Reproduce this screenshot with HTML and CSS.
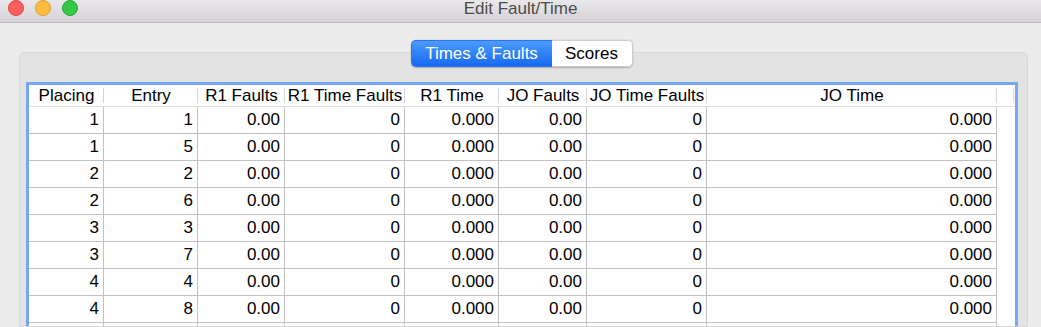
FILE: index.html
```html
<!DOCTYPE html>
<html>
<head>
<meta charset="utf-8">
<link rel="stylesheet" href="styles.css">
</head>
<body>
<div class="window">
  <div class="titlebar">
    <div class="lights">
      <span class="light red"></span>
      <span class="light yellow"></span>
      <span class="light green"></span>
    </div>
    <div class="title">Edit Fault/Time</div>
  </div>
  <div class="tabs">
    <div class="tab active">Times &amp; Faults</div>
    <div class="tab">Scores</div>
  </div>
  <div class="groupbox">
    <div class="table">
      <div class="row head">
        <div class="cell">Placing</div>
        <div class="cell">Entry</div>
        <div class="cell">R1 Faults</div>
        <div class="cell">R1 Time Faults</div>
        <div class="cell">R1 Time</div>
        <div class="cell">JO Faults</div>
        <div class="cell">JO Time Faults</div>
        <div class="cell">JO Time</div>
        <div class="cell fill"></div>
      </div>
      <div class="row"><div class="cell">1</div><div class="cell">1</div><div class="cell">0.00</div><div class="cell">0</div><div class="cell">0.000</div><div class="cell">0.00</div><div class="cell">0</div><div class="cell">0.000</div><div class="cell fill"></div></div>
      <div class="row"><div class="cell">1</div><div class="cell">5</div><div class="cell">0.00</div><div class="cell">0</div><div class="cell">0.000</div><div class="cell">0.00</div><div class="cell">0</div><div class="cell">0.000</div><div class="cell fill"></div></div>
      <div class="row"><div class="cell">2</div><div class="cell">2</div><div class="cell">0.00</div><div class="cell">0</div><div class="cell">0.000</div><div class="cell">0.00</div><div class="cell">0</div><div class="cell">0.000</div><div class="cell fill"></div></div>
      <div class="row"><div class="cell">2</div><div class="cell">6</div><div class="cell">0.00</div><div class="cell">0</div><div class="cell">0.000</div><div class="cell">0.00</div><div class="cell">0</div><div class="cell">0.000</div><div class="cell fill"></div></div>
      <div class="row"><div class="cell">3</div><div class="cell">3</div><div class="cell">0.00</div><div class="cell">0</div><div class="cell">0.000</div><div class="cell">0.00</div><div class="cell">0</div><div class="cell">0.000</div><div class="cell fill"></div></div>
      <div class="row"><div class="cell">3</div><div class="cell">7</div><div class="cell">0.00</div><div class="cell">0</div><div class="cell">0.000</div><div class="cell">0.00</div><div class="cell">0</div><div class="cell">0.000</div><div class="cell fill"></div></div>
      <div class="row"><div class="cell">4</div><div class="cell">4</div><div class="cell">0.00</div><div class="cell">0</div><div class="cell">0.000</div><div class="cell">0.00</div><div class="cell">0</div><div class="cell">0.000</div><div class="cell fill"></div></div>
      <div class="row"><div class="cell">4</div><div class="cell">8</div><div class="cell">0.00</div><div class="cell">0</div><div class="cell">0.000</div><div class="cell">0.00</div><div class="cell">0</div><div class="cell">0.000</div><div class="cell fill"></div></div>
      <div class="row"><div class="cell"></div><div class="cell"></div><div class="cell"></div><div class="cell"></div><div class="cell"></div><div class="cell"></div><div class="cell"></div><div class="cell"></div><div class="cell fill"></div></div>
    </div>
  </div>
</div>
</body>
</html>
```

FILE: styles.css
```css
html, body {
  margin: 0;
  padding: 0;
  height: 327px;
  overflow: hidden;
}
body {
  background: #ececec;
  font-family: "Liberation Sans", Arial, sans-serif;
  font-size: 17px;
  color: #000;
}
.window {
  display: flex;
  flex-direction: column;
  height: 327px;
}
.titlebar {
  height: 22px;
  flex: none;
  display: flex;
  align-items: flex-start;
  background: linear-gradient(#e9e7e9, #d5d3d5);
  border-bottom: 1px solid #bdbbbd;
}
.lights {
  display: flex;
  gap: 11px;
  margin-left: 8px;
  width: 88px;
}
.light {
  width: 16px;
  height: 16px;
  border-radius: 50%;
  box-sizing: border-box;
}
.red { background: #fc605c; border: 1px solid #e0443e; }
.yellow { background: #fdbc40; border: 1px solid #dea123; }
.green { background: #34c84a; border: 1px solid #1fab2f; }
.title {
  flex: 1;
  text-align: center;
  color: #4c4c4c;
  line-height: 18px;
  margin-right: 96px;
}
.tabs {
  align-self: center;
  display: flex;
  margin-top: 17px;
  margin-left: 2px;
  height: 27px;
  position: relative;
  z-index: 1;
  border-radius: 5px;
  box-shadow: 0 0.5px 1.5px rgba(0,0,0,0.25);
}
.tab {
  box-sizing: border-box;
  height: 27px;
  line-height: 26px;
  text-align: center;
  background: #fff;
  border: 1px solid #cdcdcd;
}
.tab:first-child {
  width: 141px;
  border-radius: 5px 0 0 5px;
  border-right: none;
}
.tab:last-child {
  width: 81px;
  border-radius: 0 5px 5px 0;
  border-left: none;
}
.tab.active {
  color: #fff;
  background: linear-gradient(#4c9bfd, #1769f3);
  border-color: #2a74ee;
}
.groupbox {
  margin: -15px 13px 0 19px;
  flex: 1;
  background: #e3e3e3;
  border: 1px solid #d8d8d8;
  border-radius: 6px 6px 0 0;
  padding: 29px 9px 0 6px;
  overflow: hidden;
}
.table {
  border: 3px solid #74a8f1;
  border-bottom: none;
  background: #fff;
}
.row {
  display: grid;
  grid-template-columns: 75px 94px 87px 120px 94px 88px 120px 290px 1fr;
  height: 27px;
}
.cell {
  box-sizing: border-box;
  border-right: 1px solid #c2c2c2;
  border-bottom: 1px solid #c2c2c2;
  text-align: right;
  padding-right: 4px;
  line-height: 26px;
  white-space: nowrap;
  overflow: hidden;
}
.cell.fill {
  border: none;
}
.row.head {
  height: 22px;
}
.head .cell {
  text-align: center;
  padding-right: 0;
  line-height: 21px;
  border-right: none;
  border-bottom: 1px solid #dddddd;
  background: #fff linear-gradient(#d6d6d6, #d6d6d6) no-repeat right 0 center / 1px 15px;
}
.head .cell.fill {
  border-bottom: 1px solid #dddddd;
  background: #fff linear-gradient(#d6d6d6, #d6d6d6) no-repeat right 1px center / 1px 15px;
}
```
